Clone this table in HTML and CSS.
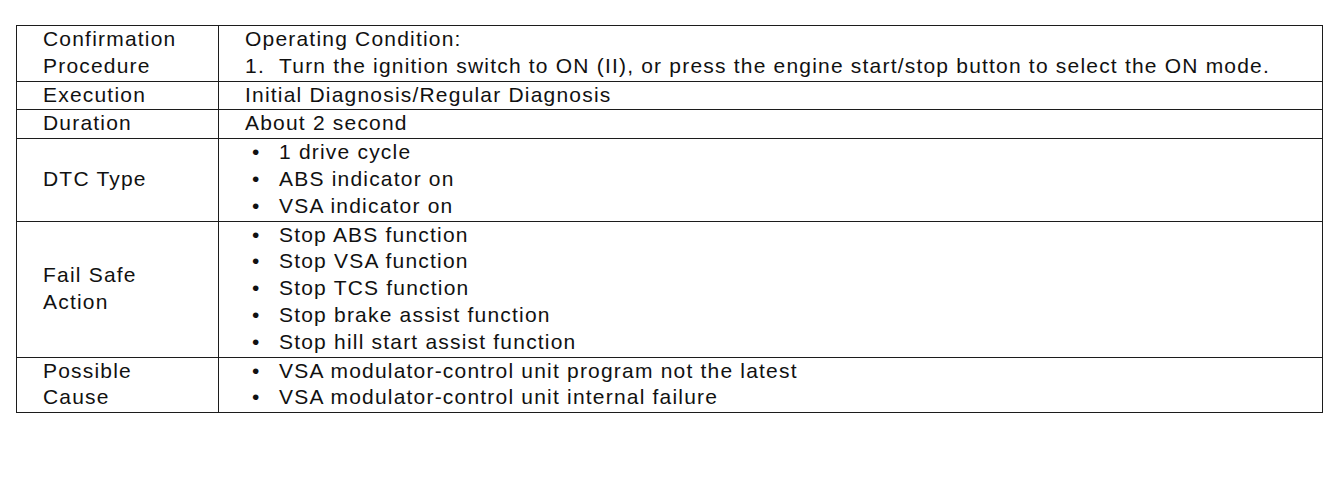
FILE: index.html
```html
<!DOCTYPE html>
<html lang="en">
<head>
<meta charset="utf-8">
<title>DTC Information</title>
<link rel="stylesheet" href="styles.css">
</head>
<body>
<div class="page">
  <table class="dtc">
    <colgroup>
      <col class="label-col">
      <col>
    </colgroup>
    <tr>
      <th>Confirmation<br>Procedure</th>
      <td>Operating Condition:<br><span class="num">1.</span>Turn the ignition switch to ON (II), or press the engine start/stop button to select the ON mode.</td>
    </tr>
    <tr>
      <th>Execution</th>
      <td>Initial Diagnosis/Regular Diagnosis</td>
    </tr>
    <tr>
      <th>Duration</th>
      <td>About 2 second</td>
    </tr>
    <tr>
      <th class="mid">DTC Type</th>
      <td>
        <ul class="bullets">
          <li>1 drive cycle</li>
          <li>ABS indicator on</li>
          <li>VSA indicator on</li>
        </ul>
      </td>
    </tr>
    <tr>
      <th class="mid">Fail Safe<br>Action</th>
      <td>
        <ul class="bullets">
          <li>Stop ABS function</li>
          <li>Stop VSA function</li>
          <li>Stop TCS function</li>
          <li>Stop brake assist function</li>
          <li>Stop hill start assist function</li>
        </ul>
      </td>
    </tr>
    <tr>
      <th>Possible<br>Cause</th>
      <td>
        <ul class="bullets">
          <li>VSA modulator-control unit program not the latest</li>
          <li>VSA modulator-control unit internal failure</li>
        </ul>
      </td>
    </tr>
  </table>
</div>
</body>
</html>
```
FILE: styles.css
```css
html, body {
  margin: 0;
  padding: 0;
  background: #ffffff;
}

.page {
  padding: 25px 0 0 16px;
}

.dtc {
  border-collapse: collapse;
  table-layout: fixed;
  width: 1307px;
  font-family: "Liberation Sans", Arial, sans-serif;
  font-size: 21px;
  letter-spacing: 1.2px;
  line-height: 26.8px;
  color: #111;
}

.label-col {
  width: 202px;
}

.dtc th,
.dtc td {
  border: 1.5px solid #1c1c1c;
  padding: 0 10px 1px 26px;
  text-align: left;
  vertical-align: top;
  font-weight: normal;
}

.dtc th.mid {
  vertical-align: middle;
}

.num {
  display: inline-block;
  width: 34px;
}

.bullets {
  list-style: none;
  margin: 0;
  padding: 0;
}

.bullets li {
  display: flex;
}

.bullets li::before {
  content: "\2022";
  display: block;
  width: 27px;
  padding-left: 7px;
  flex: none;
}
```
